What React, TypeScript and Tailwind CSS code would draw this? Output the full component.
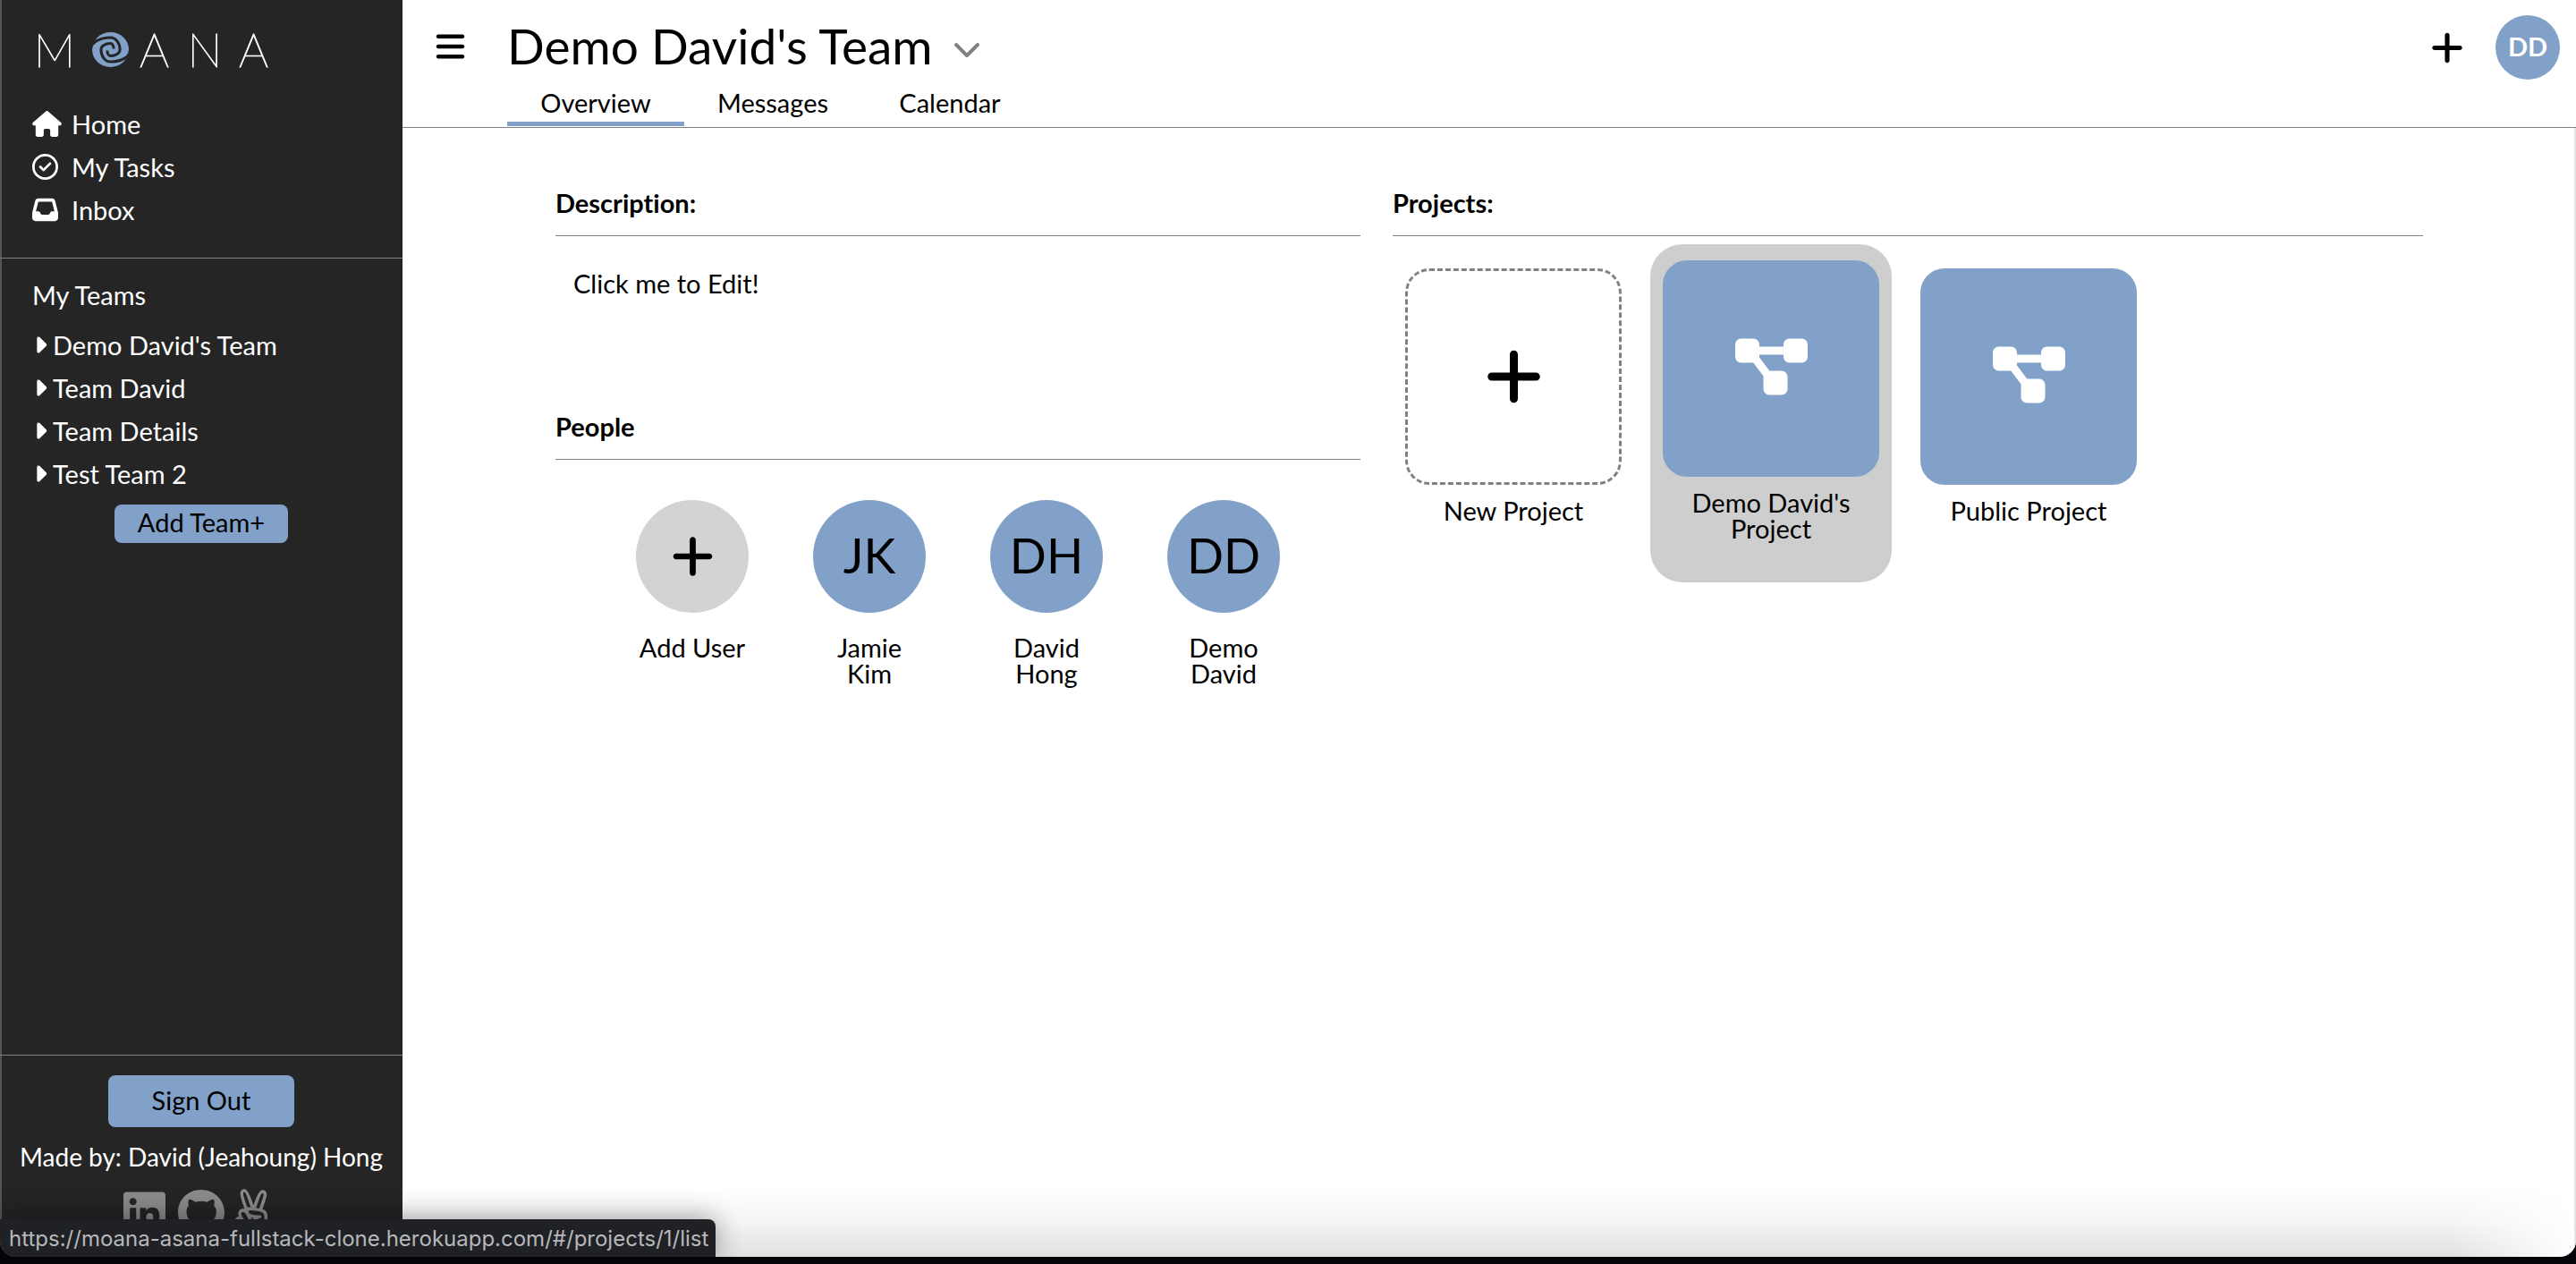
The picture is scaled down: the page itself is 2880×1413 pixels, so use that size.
import type { ReactNode } from "react";
import {
  FaAngellist,
  FaBars,
  FaCaretRight,
  FaChevronDown,
  FaDiagramProject,
  FaGithub,
  FaHouse,
  FaInbox,
  FaLinkedin,
  FaPlus,
  FaRegCircleCheck,
} from "react-icons/fa6";

const navItems = [
  { label: "Home", icon: <FaHouse className="h-[29px] w-[33px]" /> },
  { label: "My Tasks", icon: <FaRegCircleCheck className="size-[29px]" /> },
  { label: "Inbox", icon: <FaInbox className="size-[29px]" /> },
];

const teams = ["Demo David's Team", "Team David", "Team Details", "Test Team 2"];

const tabs = ["Overview", "Messages", "Calendar"];

const people = [
  { initials: "JK", name: "Jamie Kim" },
  { initials: "DH", name: "David Hong" },
  { initials: "DD", name: "Demo David" },
];

function Swirl() {
  const arm = "M-4 56 A66 38 0 0 1 62 18 A32 41 0 0 1 94 59 A32 21 0 0 1 62 80 A11 18 0 0 1 51 62";
  return (
    <svg viewBox="0 0 124 118" className="h-[39px] w-[41px] shrink-0" aria-hidden="true">
      <ellipse cx="62" cy="59" rx="62" ry="59" fill="#81a1c9" />
      <g fill="none" stroke="#252525" strokeWidth="9">
        <path d={arm} />
        <path d={arm} transform="rotate(180 62 59)" />
      </g>
    </svg>
  );
}

function Logo() {
  return (
    <a
      href="#/"
      aria-label="Moana"
      className="flex h-[39px] items-center pl-9 text-center text-[52px] leading-[39px] font-thin text-white [-webkit-text-stroke:1px_white]"
    >
      <span className="w-[50px]">M</span>
      <span className="ml-[17px]"><Swirl /></span>
      <span className="w-[57px]">A</span>
      <span className="w-14">N</span>
      <span className="w-[53px]">A</span>
    </a>
  );
}

function Sidebar() {
  return (
    <aside className="flex w-[450px] shrink-0 flex-col bg-[#252525] text-white shadow-[inset_2px_0_#555]">
      <div className="h-9 shrink-0" />
      <Logo />
      <nav className="mt-[39px] flex flex-col border-b border-[#808080] pb-[30px] pl-9">
        {navItems.map((item) => (
          <a key={item.label} href="#/" className="flex h-12 items-center">
            <span className="w-11">{item.icon}</span>
            {item.label}
          </a>
        ))}
      </nav>
      <section className="flex flex-col pt-4">
        <h2 className="flex h-12 items-center pl-9">My Teams</h2>
        <ul className="mt-2">
          {teams.map((team) => (
            <li key={team}>
              <a href="#/" className="flex h-12 items-center gap-1 pl-[35px]">
                <FaCaretRight className="h-[29px] w-5" />
                {team}
              </a>
            </li>
          ))}
        </ul>
        <button className="mt-[11px] h-[43px] w-[194px] self-center rounded-lg bg-[#81a1c9] pb-1 text-black">Add Team+</button>
      </section>
      <footer className="mt-auto flex flex-col items-center border-t border-[#808080] pt-[22px]">
        <button className="h-[58px] w-[208px] rounded-lg bg-[#81a1c9] pb-1 text-black">Sign Out</button>
        <p className="mt-[13px] text-[28px] leading-10">Made by: David (Jeahoung) Hong</p>
        <div className="mt-4 flex h-[76px] gap-[14px] text-[#8c8c8c]">
          <a href="#/" aria-label="LinkedIn"><FaLinkedin className="h-[54px] w-[47px]" /></a>
          <a href="#/" aria-label="GitHub"><FaGithub className="h-[54px] w-[52px]" /></a>
          <a href="#/" aria-label="AngelList" className="mr-2 -ml-2"><FaAngellist className="h-[54px] w-[47px]" /></a>
        </div>
      </footer>
    </aside>
  );
}

function Header() {
  return (
    <header className="flex h-[143px] shrink-0 items-start border-b border-[#808080] pr-[18px] pl-[37px]">
      <button aria-label="Toggle menu" className="mt-[34px]"><FaBars className="h-9 w-[33px]" /></button>
      <div className="ml-[47px] flex h-full flex-col">
        <div className="flex h-[103px] items-center gap-[22px]">
          <h1 className="text-[55px] leading-none">Demo David's Team</h1>
          <button aria-label="Team options" className="pt-1 text-[#808080]"><FaChevronDown className="h-9 w-8" /></button>
        </div>
        <nav className="flex">
          {tabs.map((tab, i) => (
            <a
              key={tab}
              href="#/"
              className={
                i === 0
                  ? "flex h-[38px] w-[198px] items-start justify-center border-b-[5px] border-[#81a1c9] leading-6"
                  : "flex h-[38px] w-[198px] items-start justify-center leading-6"
              }
            >
              {tab}
            </a>
          ))}
        </nav>
      </div>
      <div className="mt-[17px] ml-auto flex items-center gap-9">
        <button aria-label="Create"><FaPlus className="h-[45px] w-9" /></button>
        <button className="size-[72px] rounded-full bg-[#81a1c9] pb-1 font-bold text-white">DD</button>
      </div>
    </header>
  );
}

function SectionTitle({ children }: { children: ReactNode }) {
  return <h2 className="h-[50px] border-b border-[#808080] leading-[26px] font-bold">{children}</h2>;
}

function Person({ name, className, children }: { name: string; className: string; children: ReactNode }) {
  return (
    <li>
      <a href="#/" className="flex w-[126px] flex-col items-center">
        <span className={className}>{children}</span>
        <span className="mt-6 text-center">{name}</span>
      </a>
    </li>
  );
}

function ProjectCard({ name, active }: { name: string; active?: boolean }) {
  return (
    <a
      href="#/projects/1/list"
      className={
        active
          ? "-mt-[9px] flex h-[378px] w-[270px] flex-col items-center rounded-[36px] bg-[#cecece] pt-[18px]"
          : "flex h-[378px] w-[270px] flex-col items-center pt-[18px]"
      }
    >
      <span className="flex size-[242px] items-center justify-center rounded-[27px] bg-[#81a1c9] pb-1 text-white">
        <FaDiagramProject className="h-[72px] w-[81px]" />
      </span>
      <span className="mt-[14px] w-[190px] text-center">{name}</span>
    </a>
  );
}

export default function App() {
  return (
    <div className="relative flex h-screen flex-col bg-[#020407] font-['Lato','Liberation_Sans',sans-serif] text-[29px] leading-[29px] text-black [font-variant-ligatures:none]">
      <div className="relative flex min-h-0 flex-1 overflow-hidden rounded-b-[18px] bg-white">
        <Sidebar />
        <div className="flex min-w-0 flex-1 flex-col">
          <Header />
          <main className="flex flex-1 gap-9 border-r-2 border-[#e4e4e4] pt-[71px] pr-[169px] pl-[171px]">
            <div className="w-[900px] shrink-0">
              <section>
                <SectionTitle>Description:</SectionTitle>
                <button className="mt-[34px] block px-5 py-1">Click me to Edit!</button>
              </section>
              <section className="mt-[129px]">
                <SectionTitle>People</SectionTitle>
                <ul className="mt-[45px] flex gap-[72px] pl-[90px]">
                  <Person name="Add User" className="flex size-[126px] items-center justify-center rounded-full bg-[#d3d3d3]">
                    <FaPlus className="h-[54px] w-[47px]" />
                  </Person>
                  {people.map((p) => (
                    <Person
                      key={p.initials}
                      name={p.name}
                      className="flex size-[126px] items-center justify-center rounded-full bg-[#81a1c9] pb-1 text-[54px]"
                    >
                      {p.initials}
                    </Person>
                  ))}
                </ul>
              </section>
            </div>
            <section className="min-w-0 flex-1">
              <SectionTitle>Projects:</SectionTitle>
              <div className="mt-[18px] flex gap-[18px]">
                <button className="flex h-[378px] w-[270px] flex-col items-center pt-[18px]">
                  <span className="flex size-[242px] items-center justify-center rounded-[27px] border-[3px] border-dashed border-[#808080]">
                    <FaPlus className="h-[72px] w-[63px]" />
                  </span>
                  <span className="mt-[14px]">New Project</span>
                </button>
                <ProjectCard name="Demo David's Project" active />
                <ProjectCard name="Public Project" />
              </div>
            </section>
          </main>
        </div>
        <div className="pointer-events-none absolute right-0 bottom-0 left-0 h-20 bg-linear-to-t from-black/12 via-black/4 to-transparent [mask-image:linear-gradient(to_left,transparent,black_140px)]" />
        <div className="absolute bottom-0 left-0 flex h-[42px] items-center rounded-tr-lg bg-[#202124] pr-2 pl-[10px] font-['Inter',sans-serif] text-[24px] text-[#b6b8bc] shadow-[0_0_30px_rgba(0,0,0,0.4)]">
          https://moana-asana-fullstack-clone.herokuapp.com/#/projects/1/list
        </div>
      </div>
      <div className="h-2 shrink-0" />
    </div>
  );
}
